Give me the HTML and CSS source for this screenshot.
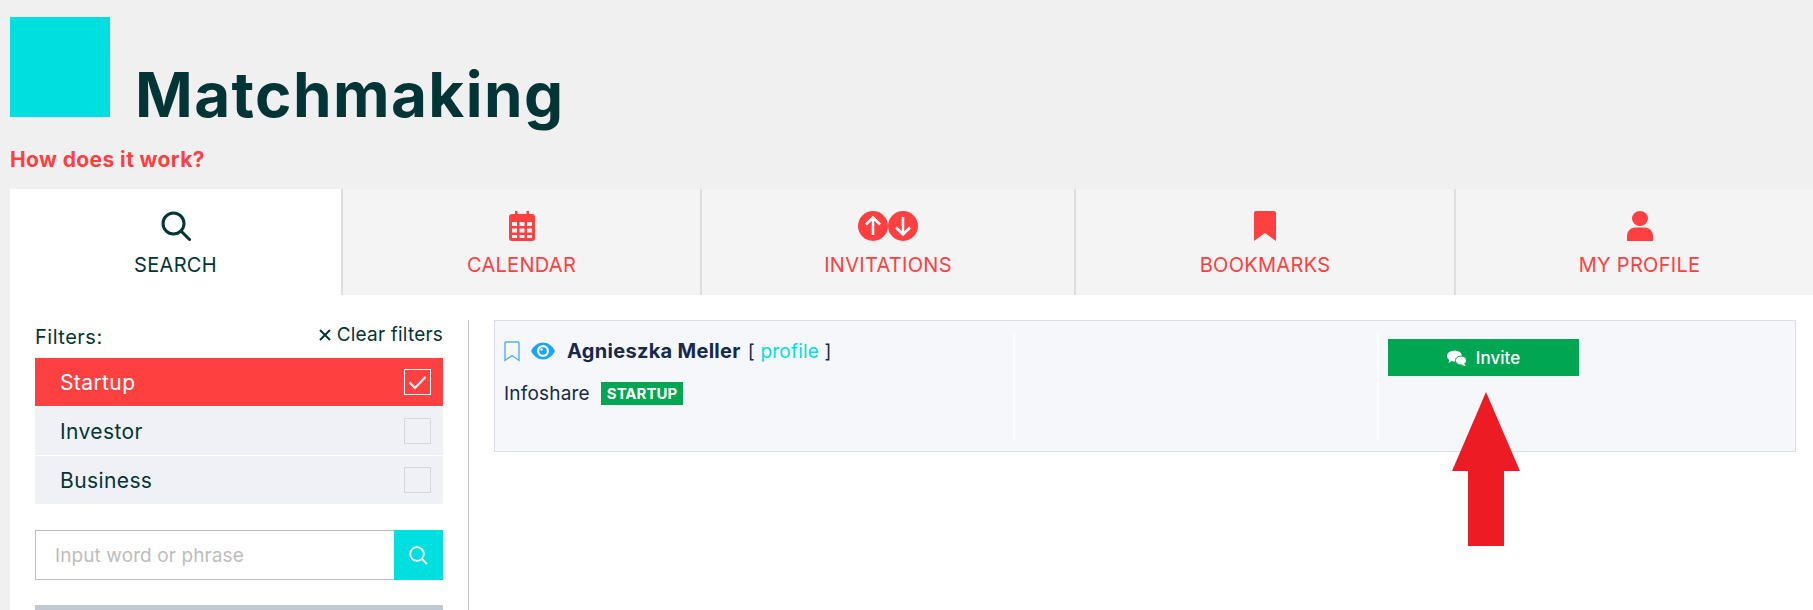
FILE: index.html

```html
<!DOCTYPE html>
<html lang="en">
<head>
  <meta charset="UTF-8">
  <title>Matchmaking</title>
  <link rel="stylesheet" href="styles.css">
</head>
<body>
  <div class="header">
    <div class="title-row">
      <div class="logo"></div>
      <h1>Matchmaking</h1>
    </div>
    <a class="how-link" href="#">How does it work?</a>
  </div>

  <div class="tabs">
    <a class="tab active" href="#">
      <svg class="tab-icon" width="30" height="30" viewBox="0 0 30 30" fill="none" stroke="currentColor" stroke-width="3">
        <circle cx="12.5" cy="12.5" r="10.5"/>
        <path d="M20 20l8.5 8.5" stroke-linecap="round"/>
      </svg>
      <span>SEARCH</span>
    </a>
    <a class="tab" href="#">
      <svg class="tab-icon" width="26" height="30" viewBox="0 0 26 30" fill="currentColor">
        <path d="M6 0h2.500v4h-2.500zM17.500 0h2.500v4h-2.500z"/>
        <path fill-rule="evenodd" d="M3 3h20a3 3 0 0 1 3 3v21a3 3 0 0 1-3 3H3a3 3 0 0 1-3-3V6a3 3 0 0 1 3-3zM3 11v4h5v-4zM10.500 11v4h5v-4zM18 11v4h5v-4zM3 17.500v4h5v-4zM10.500 17.500v4h5v-4zM18 17.500v4h5v-4zM3 24v3h5v-3zM10.500 24v3h5v-3zM18 24v3h5v-3z"/>
      </svg>
      <span>CALENDAR</span>
    </a>
    <a class="tab" href="#">
      <svg class="tab-icon" width="60" height="30" viewBox="0 0 60 30">
        <circle cx="15" cy="15" r="15" fill="currentColor"/>
        <circle cx="45" cy="15" r="15" fill="currentColor"/>
        <path d="M15 24V7M8 13.500L15 6.500l7 7" fill="none" stroke="#fff" stroke-width="2.500"/>
        <path d="M45 6v17M38 16.500l7 7 7-7" fill="none" stroke="#fff" stroke-width="2.500"/>
      </svg>
      <span>INVITATIONS</span>
    </a>
    <a class="tab" href="#">
      <svg class="tab-icon" width="22" height="30" viewBox="0 0 22 30" fill="currentColor">
        <path d="M2 0h18a2 2 0 0 1 2 2v28l-11-8-11 8V2a2 2 0 0 1 2-2z"/>
      </svg>
      <span>BOOKMARKS</span>
    </a>
    <a class="tab" href="#">
      <svg class="tab-icon" width="26" height="30" viewBox="0 0 26 30" fill="currentColor">
        <ellipse cx="13" cy="7.500" rx="8" ry="7.500"/>
        <path d="M0 30v-5c0-5 4-8.500 8-8.500h10c4 0 8 3.500 8 8.500v5z"/>
      </svg>
      <span>MY PROFILE</span>
    </a>
  </div>

  <div class="main">
    <div class="sidebar">
      <div class="filters-head">
        <span class="filters-label">Filters:</span>
        <a class="clear-link" href="#">
          <svg width="12" height="12" viewBox="0 0 12 12" stroke="currentColor" stroke-width="2" fill="none"><path d="M1 1l10 10M11 1L1 11"/></svg>
          Clear filters
        </a>
      </div>
      <div class="filter-list">
        <div class="filter selected">
          Startup
          <span class="checkbox">
            <svg width="19" height="15" viewBox="0 0 19 15" fill="none" stroke="#fff" stroke-width="2"><path d="M1.500 7.500l5.500 5.500L17.500 2"/></svg>
          </span>
        </div>
        <div class="filter">Investor<span class="checkbox"></span></div>
        <div class="filter">Business<span class="checkbox"></span></div>
      </div>
      <div class="search-box">
        <input class="search-input" type="text" placeholder="Input word or phrase">
        <button class="search-btn">
          <svg width="19" height="19" viewBox="0 0 19 19" fill="none" stroke="#fff" stroke-width="1.800"><circle cx="8" cy="8" r="6.800"/><path d="M13 13l5 5"/></svg>
        </button>
      </div>
      <div class="submit-bar"></div>
    </div>

    <div class="results">
      <div class="card">
        <div class="card-col col-person">
          <div class="person-row">
            <svg class="bookmark-icon" width="16" height="21" viewBox="0 0 16 21" fill="none" stroke="#4db2f5" stroke-width="1.400"><path d="M2 1h12a1 1 0 0 1 1 1v17.500l-7-5-7 5V2a1 1 0 0 1 1-1z"/></svg>
            <svg class="eye-icon" width="24" height="18" viewBox="0 0 24 18">
              <path d="M0 9C3 3.500 7 .5 12 .5S21 3.500 24 9c-3 5.500-7 8.500-12 8.500S3 14.500 0 9z" fill="#1aa7f0"/>
              <circle cx="12" cy="9" r="6" fill="#f6f7fb"/>
              <circle cx="12" cy="9" r="3.800" fill="#1aa7f0"/>
              <circle cx="10.500" cy="7.500" r="1.200" fill="#f6f7fb"/>
            </svg>
            <span class="person-name">Agnieszka Meller</span>
            <span class="profile-link">[ <a href="#">profile</a> ]</span>
          </div>
          <div class="company-row">
            Infoshare
            <span class="badge">STARTUP</span>
          </div>
        </div>
        <div class="card-col col-middle"></div>
        <div class="card-col col-action">
          <button class="invite-btn">
            <svg width="20" height="16" viewBox="0 0 20 16" fill="#fff">
              <ellipse cx="7.500" cy="6" rx="7.500" ry="5.500"/>
              <path d="M2.500 9L1.500 13l4.500-3z"/>
              <ellipse cx="14" cy="10.500" rx="5.500" ry="4.500" stroke="#00a651" stroke-width="1"/>
              <path d="M17 13.500l2 2.500-5-1z"/>
            </svg>
            Invite
          </button>
        </div>
      </div>
    </div>
  </div>

  <svg class="arrow" width="68" height="156" viewBox="0 0 68 156" fill="#ed1c24">
    <path d="M34 0L68 79H52V154H16V79H0z"/>
  </svg>
</body>
</html>
```

FILE: styles.css

```css
* {
  margin: 0;
  padding: 0;
  box-sizing: border-box;
}

html, body {
  height: 100%;
  overflow: hidden;
}

body {
  display: flex;
  flex-direction: column;
  position: relative;
  padding-left: 10px;
  background: #f0f0f0;
  font-family: 'Inter', sans-serif;
  color: #033537;
}

a {
  text-decoration: none;
  color: inherit;
}

.header {
  flex: none;
  height: 189px;
  padding-top: 17px;
}

.title-row {
  display: flex;
  align-items: baseline;
  gap: 25px;
  height: 131px;
}

.logo {
  width: 100px;
  height: 100px;
  background: #00dfdf;
}

.title-row h1 {
  font-size: 62px;
  line-height: 1;
  font-weight: 700;
  letter-spacing: 1.4px;
  color: #033537;
}

.how-link {
  display: block;
  font-size: 21px;
  line-height: 24px;
  font-weight: 700;
  letter-spacing: .4px;
  color: #ff4040;
}

.tabs {
  flex: none;
  display: grid;
  grid-template-columns: 333px 359px 374px 380px 1fr;
  height: 106px;
  background: #f4f4f4;
}

.tab {
  display: flex;
  flex-direction: column;
  align-items: center;
  padding-top: 22px;
  border-right: 2px solid #dedede;
  color: #ff4040;
  font-size: 20px;
  letter-spacing: .3px;
}

.tab:last-child {
  padding-left: 10px;
  border-right: none;
}

.tab.active {
  background: #fff;
  color: #033537;
}

.tab-icon {
  margin-bottom: 12px;
}

.main {
  flex: 1;
  min-height: 0;
  overflow: hidden;
  display: flex;
  background: #fff;
  padding-top: 25px;
}

.sidebar {
  width: 459px;
  flex-shrink: 0;
  padding: 0 25px;
  border-right: 1px solid #c8c8c8;
}

.filters-head {
  display: flex;
  justify-content: space-between;
  height: 38px;
  padding-top: 2px;
  font-size: 20px;
  letter-spacing: .5px;
}

.clear-link {
  padding-top: 2px;
  font-size: 19px;
  line-height: 22px;
  letter-spacing: .2px;
}

.filters-label {
  padding-top: 3px;
}

.filter {
  display: flex;
  justify-content: space-between;
  align-items: center;
  height: 48px;
  margin-bottom: 1px;
  padding: 0 12px 0 25px;
  background: #f0f1f6;
  font-size: 21px;
  letter-spacing: .4px;
}

.filter.selected {
  background: #ff4040;
  color: #fff;
}

.checkbox {
  display: flex;
  align-items: center;
  justify-content: center;
  width: 27px;
  height: 26px;
  border: 1px solid #d6d6da;
}

.selected .checkbox {
  border-color: #fff;
}

.search-box {
  display: flex;
  height: 50px;
  margin-top: 26px;
}

.search-input {
  flex: 1;
  min-width: 0;
  padding-left: 19px;
  border: 1px solid #bcbcc2;
  border-right: none;
  border-radius: 0;
  outline: none;
  font-family: 'Inter', sans-serif;
  font-size: 19px;
  letter-spacing: .1px;
}

.search-input::placeholder {
  color: #bdbdbd;
}

.search-btn {
  display: flex;
  align-items: center;
  justify-content: center;
  width: 49px;
  border: none;
  background: #00dfdf;
}

.submit-bar {
  height: 40px;
  margin-top: 25px;
  background: #c0c8d2;
}

.results {
  flex: 1;
  padding: 0 17px 0 25px;
}

.card {
  display: flex;
  height: 132px;
  padding: 11px 0;
  background: #f6f7fb;
  border: 1px solid #dcdde6;
}

.card-col {
  height: 108px;
  border-right: 2px solid #fbfbfd;
}

.col-person {
  width: 520px;
  padding: 7px 0 0 9px;
}

.col-middle {
  width: 364px;
}

.col-action {
  flex: 1;
  padding: 7px 0 0 9px;
  border-right: none;
}

.person-row {
  display: flex;
  align-items: center;
  height: 24px;
  color: #15294b;
  font-size: 19px;
  letter-spacing: .2px;
}

.bookmark-icon {
  margin-right: 11px;
}

.eye-icon {
  margin-right: 12px;
}

.person-name {
  font-size: 20px;
  font-weight: 700;
  letter-spacing: .3px;
  margin-right: 7px;
}

.profile-link a {
  color: #00dfdf;
}

.company-row {
  display: flex;
  align-items: center;
  gap: 11px;
  height: 24px;
  margin-top: 18px;
  color: #15294b;
  font-size: 19px;
  letter-spacing: .2px;
}

.badge {
  padding: 0 6px;
  height: 23px;
  line-height: 23px;
  background: #00a651;
  color: #fff;
  font-size: 15px;
  font-weight: 700;
  letter-spacing: 0;
}

.invite-btn {
  display: flex;
  align-items: center;
  justify-content: center;
  gap: 9px;
  width: 191px;
  height: 37px;
  border: none;
  background: #00a651;
  color: #fff;
  font-family: 'Inter', sans-serif;
  font-size: 17px;
  font-weight: 500;
}

.arrow {
  position: absolute;
  left: 1452px;
  top: 392px;
}
```
